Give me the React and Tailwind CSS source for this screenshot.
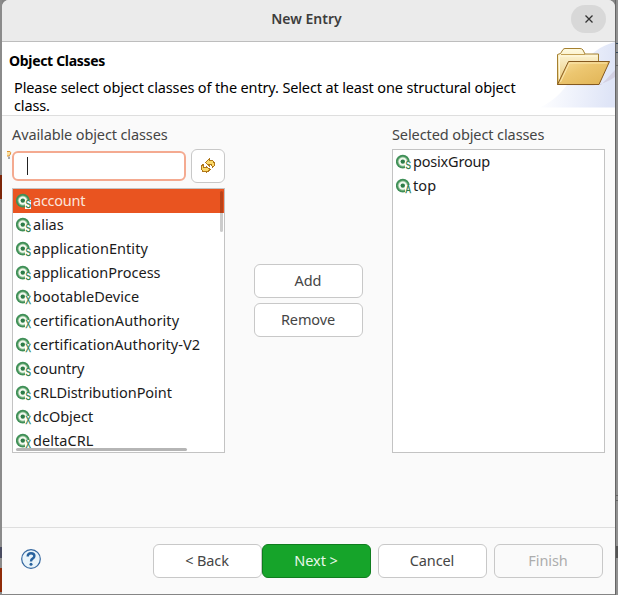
import React from "react";

const available = [
  ["account", "S", "tracking-[-0.25px]"],
  ["alias", "S", "tracking-[0px]"],
  ["applicationEntity", "S", "tracking-[0.06px]"],
  ["applicationProcess", "S", "tracking-[0px]"],
  ["bootableDevice", "X", "tracking-[0.06px]"],
  ["certificationAuthority", "X", "tracking-[0.09px]"],
  ["certificationAuthority-V2", "X", "tracking-[0.05px]"],
  ["country", "S", "tracking-[-0.15px]"],
  ["cRLDistributionPoint", "S", "tracking-[-0.05px]"],
  ["dcObject", "X", "tracking-[0px]"],
  ["deltaCRL", "X", "tracking-[0.05px]"],
];

const selected = [
  ["posixGroup", "S", "tracking-[-0.2px]"],
  ["top", "A", "tracking-[0.1px]"],
];

function ClassIcon({ kind }) {
  return (
    <svg width="16" height="18" viewBox="0 0 16 18" className="shrink-0">
      <circle cx="6.8" cy="8.6" r="6.9" fill="#3f8f57" />
      <circle cx="6.8" cy="8.6" r="5.2" fill="#83b98b" />
      <circle cx="6.8" cy="8.6" r="4.2" fill="#f1f8ee" />
      <circle cx="6.8" cy="8.6" r="2.2" fill="#2d7c48" />
      <rect x="9" y="8" width="6" height="9" fill="#ffffff" />
      <text
        x="9.4"
        y="16.2"
        fontSize="10"
        fontWeight="400"
        fontFamily="Liberation Sans, sans-serif"
        fill="#2a7a48"
        stroke="#2a7a48"
        strokeWidth=".3"
        textLength="5.4"
        lengthAdjust="spacingAndGlyphs"
      >
        {kind}
      </text>
    </svg>
  );
}

function Row({ item, active }) {
  const [name, kind, tracking] = item;
  return (
    <div
      className={
        "flex h-6 shrink-0 items-center pl-[3px] " +
        (active ? "bg-[#e95420] text-[#fbe5dc]" : "text-[#1b1b1b]")
      }
    >
      <ClassIcon kind={kind} />
      <span className={"mb-[2px] ml-px whitespace-nowrap " + tracking}>{name}</span>
    </div>
  );
}

function Button({ children, look = "bg-white border-[#c8c8c8] text-[#454545]" }) {
  return (
    <button
      className={
        "flex h-[34px] w-[109px] shrink-0 items-center justify-center rounded-[6px] border pb-[2px] pr-px tracking-[-0.1px] " +
        look
      }
    >
      {children}
    </button>
  );
}

function Folder() {
  return (
    <svg width="75" height="66" viewBox="0 0 75 66" className="shrink-0">
      <defs>
        <linearGradient id="wash" x1="0" x2="1" y1="0" y2="0.1">
          <stop offset="0.05" stopColor="#fff" />
          <stop offset="0.5" stopColor="#f0f3fc" />
          <stop offset="1" stopColor="#dfe5f7" />
        </linearGradient>
        <linearGradient id="back" x1="0" x2="0" y1="0" y2="1">
          <stop offset="0" stopColor="#fffbe2" />
          <stop offset="1" stopColor="#e9c777" />
        </linearGradient>
        <linearGradient id="front" x1="0" x2="1" y1="0" y2="1">
          <stop offset="0" stopColor="#f7dc98" />
          <stop offset="0.4" stopColor="#ecc670" />
          <stop offset="1" stopColor="#e0b354" />
        </linearGradient>
      </defs>
      <path d="M75 0C62 3 48 12 36 30C26 46 16 58 0 65.500H75Z" fill="url(#wash)" />
      <path d="M17 43H61L75 28V35Q65 42 53 43.500Z" fill="#b9a9bd" opacity=".35" />
      <path
        d="M17.500 42.500V12.500L20.500 11.500L23 7.500Q24 6.500 25 6.500H40Q42 6.500 43 8L45 12H58.500V20L50 42.500Z"
        fill="url(#back)"
        stroke="#a5802f"
      />
      <path d="M21 12.500H45" fill="none" stroke="#c3a055" />
      <path d="M19.500 40V14H57" fill="none" stroke="#fff9df" />
      <path d="M17.500 42.500L28.500 19.500H69.500L59 42.500Z" fill="url(#front)" stroke="#85591f" />
      <path d="M20.500 40L29.500 21H67" fill="none" stroke="#fbe7b0" />
    </svg>
  );
}

function Refresh() {
  return (
    <svg
      width="16"
      height="16"
      viewBox="0 0 16 16"
      fill="#fbd968"
      stroke="#b1781a"
      strokeWidth="1"
      shapeRendering="crispEdges"
    >
      <path d="M5.500 4.500L9.500 .8V2.500H12.500L14.500 5V7.500L12.500 9.500L11.500 6.500H9.500V8Z" />
      <path d="M10 11.500L6 15.200V13.500H3L1 11V8.500L3 6.500L4 9.500H6V8Z" />
    </svg>
  );
}

export default function App() {
  return (
    <div className="flex h-[595px] w-[618px] overflow-hidden bg-[#858585] text-[14.5px] leading-[18px] [font-family:'Noto_Sans',sans-serif]">
      <div className="flex w-[2px] shrink-0 flex-col bg-[#8b8b8b]">
        <div className="mt-[175px] h-6 shrink-0 bg-[#7c2508]" />
        <div className="mt-[348px] h-[11px] shrink-0 bg-[#4a4c60]" />
        <div className="mt-[10px] h-6 shrink-0 bg-[#8f2b08]" />
      </div>

      <div className="flex h-[594px] w-[613px] shrink-0 flex-col overflow-hidden rounded-t-[7px] bg-[#fafafa]">
        <header className="flex h-[42px] shrink-0 items-center border-b border-[#bdbdbd] bg-[#ebebeb] pb-[3px] pl-[40px] pr-[9px]">
          <h1 className="flex-1 text-center text-[14px] font-semibold text-[#3d3d3d]">New Entry</h1>
          <button className="flex h-[28px] w-[35px] items-center justify-center rounded-full bg-[#d8d8d8]">
            <svg width="8" height="8" viewBox="0 0 8 8" stroke="#333" strokeWidth="1.3">
              <path d="M.5 .5L7.500 7.500M7.500 .5L.5 7.500" />
            </svg>
          </button>
        </header>

        <section className="flex h-[74px] shrink-0 justify-between border-b border-[#dedede] bg-white">
          <div className="flex flex-col pl-[7px] pt-[10px] text-black">
            <h2 className="text-[14px] font-bold tracking-[-0.32px]">Object Classes</h2>
            <p className="ml-[5px] mt-[8px] whitespace-nowrap tracking-[-0.14px]">
              Please select object classes of the entry. Select at least one structural object
              <br />
              class.
            </p>
          </div>
          <div className="-ml-20">
            <Folder />
          </div>
        </section>

        <main className="flex h-[412px] shrink-0 border-b border-[#dedede] text-[#454545]">
          <div className="flex w-[223px] shrink-0 flex-col pl-[10px] pt-[9px]">
            <h3 className="h-[18px] whitespace-nowrap tracking-[-0.12px]">Available object classes</h3>
            <div className="relative mt-[6px] flex h-[34px] items-center justify-between">
              <svg className="absolute -left-[5px] top-[2px]" width="5" height="9" viewBox="0 0 5 9">
                <path d="M0 .5H3Q4 1 3.500 3L2 5H0" fill="#fce0a0" stroke="#df922f" />
                <path d="M1 5.500H3V8H1" fill="#a9a9ae" />
              </svg>
              <div className="flex h-[30px] w-[174px] items-center rounded-[6px] border-2 border-[#f4aa90] bg-white pl-[13px]">
                <span className="h-[18px] w-px bg-[#222]" />
              </div>
              <button className="flex size-[34px] items-center justify-center rounded-[6px] border border-[#c8c8c8] bg-white">
                <Refresh />
              </button>
            </div>
            <div className="relative mt-[5px] flex h-[265px] flex-col overflow-hidden border border-[#c3c3c3] bg-white">
              {available.map((item, i) => (
                <Row key={item[0]} item={item} active={i === 0} />
              ))}
              <div className="absolute right-[1px] top-[2px] h-[41px] w-[3px] rounded-full bg-black/20" />
              <div className="absolute bottom-[1px] left-[3px] h-[3px] w-[171px] rounded-full bg-[#b5b5b5]" />
            </div>
          </div>

          <div className="flex flex-1 flex-col gap-[5px] pl-[29px] pt-[148px]">
            <Button>Add</Button>
            <Button>Remove</Button>
          </div>

          <div className="mr-[10px] flex w-[213px] shrink-0 flex-col pt-[9px]">
            <h3 className="h-[18px] whitespace-nowrap tracking-[-0.1px]">Selected object classes</h3>
            <div className="mt-[6px] flex h-[304px] flex-col border border-[#c3c3c3] bg-white">
              {selected.map((item) => (
                <Row key={item[0]} item={item} />
              ))}
            </div>
          </div>
        </main>

        <footer className="flex h-[66px] items-center pl-[19px]">
          <svg width="20" height="20" viewBox="0 0 20 20" className="mb-1 shrink-0">
            <circle cx="10" cy="10" r="9.3" fill="#e9f4fa" stroke="#3568a0" strokeWidth="1.2" />
            <path
              d="M6.700 7.500Q6.700 4.200 10 4.200Q13.400 4.200 13.400 7Q13.400 8.600 11.600 9.600Q10 10.500 10 12.500"
              fill="none"
              stroke="#28629e"
              strokeWidth="2.400"
            />
            <circle cx="10" cy="15.200" r="1.500" fill="#28629e" />
          </svg>
          <div className="ml-[112px] flex">
            <Button>&lt; Back</Button>
            <Button look="bg-[#16a42a] border-[#0f7d1e] text-[#e8f8ea]">Next &gt;</Button>
          </div>
          <div className="ml-[7px] flex gap-[7px]">
            <Button>Cancel</Button>
            <Button look="bg-[#fafafa] border-[#c8c8c8] text-[#adadad]">Finish</Button>
          </div>
        </footer>
      </div>

      <div className="flex w-[3px] shrink-0 flex-col border-l border-[#666] bg-[#919191]">
        <div className="mt-[43px] h-[10px] shrink-0 border-y border-[#344a60]" />
        <div className="mt-[12px] h-px shrink-0 bg-[#666]" />
        <div className="mt-[429px] h-[6px] shrink-0 border-y border-[#666]" />
        <div className="mt-[45px] h-[12px] shrink-0 bg-[#555]" />
      </div>
    </div>
  );
}
